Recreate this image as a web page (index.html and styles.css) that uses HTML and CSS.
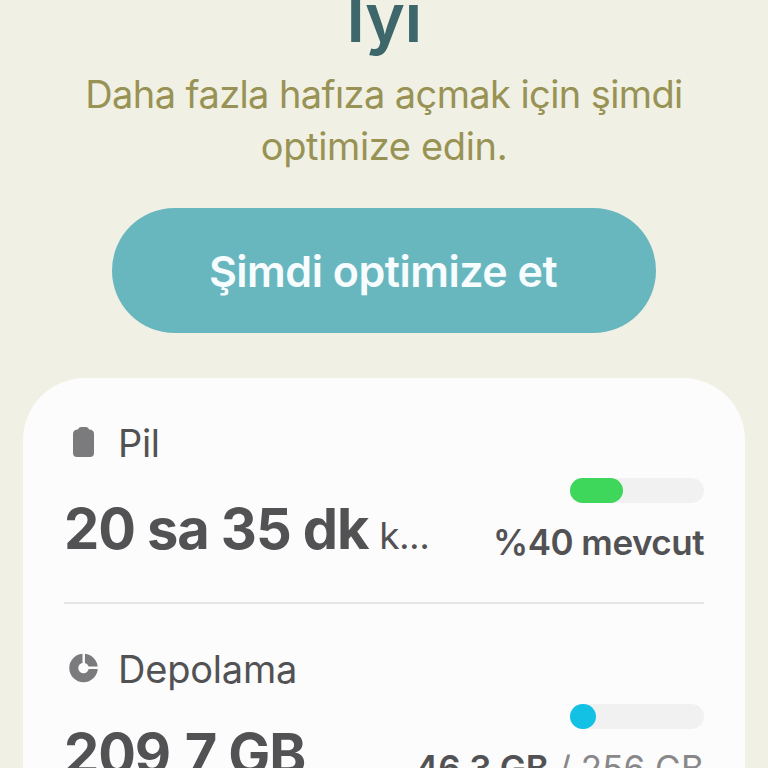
FILE: index.html
```
<!DOCTYPE html>
<html lang="tr">
<head>
<meta charset="utf-8">
<title>Cihaz bakımı</title>
<link rel="stylesheet" href="styles.css">
</head>
<body>
<main class="screen">
  <h1 class="status"><span>İyi</span></h1>
  <p class="hint"><span class="l1">Daha fazla hafıza açmak için şimdi</span><br><span class="l2">optimize edin.</span></p>
  <button class="optimize"><span>Şimdi optimize et</span></button>
  <section class="card">
    <article class="item">
      <div class="title">
        <svg class="icon" viewBox="0 0 40 40"><path fill="#7b7b7d" d="M15 7.500Q15.300 5 18 5h5q2.700 0 3 2.500h1Q31 8 31 12v19q0 4-4 4H14q-4 0-4-4V12q0-4 4-4.500Z"/></svg>
        <span class="name pil">Pil</span>
      </div>
      <div class="row">
        <div class="value"><strong class="time">20 sa 35 dk</strong><span class="rest">k...</span></div>
        <div class="usage">
          <div class="bar"><div class="fill green"></div></div>
          <div class="amount"><b class="percent">%40 mevcut</b></div>
        </div>
      </div>
    </article>
    <article class="item storage">
      <div class="title">
        <svg class="icon" viewBox="0 0 40 40"><circle cx="20.500" cy="20" r="9.750" fill="none" stroke="#7b7b7d" stroke-width="9"/><path d="M20.700 15V4M25 19.700h11" fill="none" stroke="#fcfcfc" stroke-width="2.400"/></svg>
        <span class="name depo">Depolama</span>
      </div>
      <div class="row">
        <div class="value"><strong class="size">209,7 GB</strong></div>
        <div class="usage">
          <div class="bar"><div class="fill blue"></div></div>
          <div class="amount"><b class="used">46,3 GB</b><span class="total"> / 256 GB</span></div>
        </div>
      </div>
    </article>
  </section>
</main>
</body>
</html>
```
FILE: styles.css
```
* { box-sizing: border-box; }
body {
  margin: 0;
  background: #f1f0e4;
  color: #525254;
  font-family: Inter, "Liberation Sans", sans-serif;
}
.screen {
  display: flex;
  flex-direction: column;
  align-items: center;
  height: 768px;
  overflow: hidden;
}
.status {
  flex: none;
  margin: -23px 0 0;
  height: 91px;
  line-height: 81px;
  font-size: 68px;
  letter-spacing: -0.5px;
  font-weight: 600;
  color: #3d676b;
}
.hint {
  margin: 0;
  line-height: 52px;
  font-size: 38px;
  text-align: center;
  white-space: nowrap;
  color: #989355;
}
.l1 { letter-spacing: -0.6px; }
.l2 { letter-spacing: -0.35px; }
.optimize {
  flex: none;
  margin: 36px 0 0;
  width: 544px;
  height: 125px;
  padding: 0 2px 0 0;
  border: 0;
  border-radius: 63px;
  background: #69b7be;
  color: #f7fcff;
  font: 600 43px Inter, "Liberation Sans", sans-serif;
  letter-spacing: -0.5px;
  white-space: nowrap;
}
.card {
  flex: none;
  margin-top: 45px;
  width: 722px;
  height: 480px;
  padding: 0 41px;
  border-radius: 62px;
  background: #fcfcfc;
}
.item { height: 226px; padding-top: 40px; border-bottom: 2px solid #e5e5e5; }
.item.storage { border: 0; }
.title { display: flex; align-items: center; height: 50px; }
.icon { width: 40px; height: 40px; margin: -2px 15px 0 -1px; }
.name { font-size: 38px; line-height: 50px; }
.pil { letter-spacing: -0.3px; }
.depo { letter-spacing: -0.2px; }
.row { display: flex; justify-content: space-between; }
.value { padding-top: 25px; line-height: 72px; white-space: nowrap; }
.storage .value { padding-top: 24px; }
.value strong { font-size: 56px; font-weight: 700; letter-spacing: -1.1px; }
.rest { font-size: 37px; margin-left: 11px; letter-spacing: -0.6px; }
.usage { padding-top: 9.5px; display: flex; flex-direction: column; align-items: flex-end; }
.bar { width: 134px; height: 25px; border-radius: 13px; background: #f1f1f1; }
.fill { height: 25px; border-radius: 13px; }
.green { width: 53px; background: #3fd75b; }
.blue { width: 26px; background: #13c1e4; }
.amount { font-size: 35px; line-height: 50px; margin-top: 14px; white-space: pre; }
.amount b { font-weight: 600; }
.percent { letter-spacing: -0.5px; }
.used { letter-spacing: -0.3px; }
.total { color: #88888a; }
```
